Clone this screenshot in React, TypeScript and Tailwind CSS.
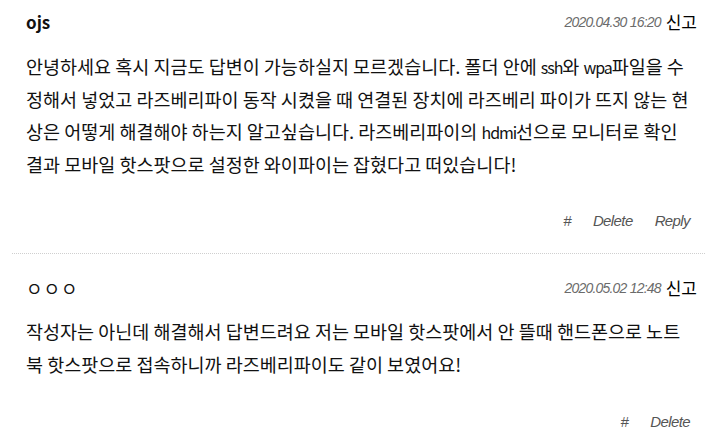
import React from "react";

interface Comment {
  author: string;
  date: string;
  body: string;
  actions: string[];
}

const comments: Comment[] = [
  {
    author: "ojs",
    date: "2020.04.30 16:20",
    body: "안녕하세요 혹시 지금도 답변이 가능하실지 모르겠습니다. 폴더 안에 ssh와 wpa파일을 수정해서 넣었고 라즈베리파이 동작 시켰을 때 연결된 장치에 라즈베리 파이가 뜨지 않는 현상은 어떻게 해결해야 하는지 알고싶습니다. 라즈베리파이의 hdmi선으로 모니터로 확인 결과 모바일 핫스팟으로 설정한 와이파이는 잡혔다고 떠있습니다!",
    actions: ["#", "Delete", "Reply"],
  },
  {
    author: "ㅇㅇㅇ",
    date: "2020.05.02 12:48",
    body: "작성자는 아닌데 해결해서 답변드려요 저는 모바일 핫스팟에서 안 뜰때 핸드폰으로 노트북 핫스팟으로 접속하니까 라즈베리파이도 같이 보였어요!",
    actions: ["#", "Delete"],
  },
];

const korean = { fontFamily: '"Noto Sans CJK KR", sans-serif' };
const italicFont = { fontFamily: '"Liberation Sans", sans-serif' };

// latin words in the body are narrower than the hangul around them
const renderBody = (text: string) =>
  text.split(/([A-Za-z]+)/).map((part, i) =>
    /^[A-Za-z]+$/.test(part) ? (
      <span key={i} className="text-[16px] leading-none tracking-[-1.1px]">
        {part}
      </span>
    ) : (
      part
    )
  );

export default function App() {
  return (
    <div className="w-[717px] h-[437px] bg-white px-3 overflow-hidden">
      {comments.map((c, i) => {
        const first = i === 0;
        return (
          <div
            key={i}
            className={`pl-[14px] pr-[7px] ${first ? "pt-[10px] pb-[20px] border-b border-dotted border-[#cfcfcf]" : "pt-[22px]"}`}
          >
            <div className="flex items-center justify-between pr-[1px] h-6">
              <span
                className={first ? "text-[17px] font-bold text-[#111]" : "text-[18px] font-normal text-[#111] tracking-[1px]"}
                style={korean}
              >
                {c.author}
              </span>
              <span className="flex items-center gap-[5px]">
                <span className="text-[14px] italic tracking-[-0.8px] text-[#6b6b6b]" style={italicFont}>
                  {c.date}
                </span>
                <span className="text-[17px] text-black" style={korean}>
                  신고
                </span>
              </span>
            </div>
            <p
              className={`text-[18.5px] leading-[32.5px] mr-[5px] text-[#111] ${first ? "mt-[16px]" : "mt-[15px]"}`}
              style={korean}
            >
              {renderBody(c.body)}
            </p>
            <div
              className={`flex justify-end items-center gap-[22px] h-6 pr-[8px] ${first ? "mt-[29px]" : "mt-[30px]"}`}
            >
              {c.actions.map((a) => (
                <span key={a} className="text-[15px] italic tracking-[-0.6px] text-[#555]" style={italicFont}>
                  {a}
                </span>
              ))}
            </div>
          </div>
        );
      })}
    </div>
  );
}
